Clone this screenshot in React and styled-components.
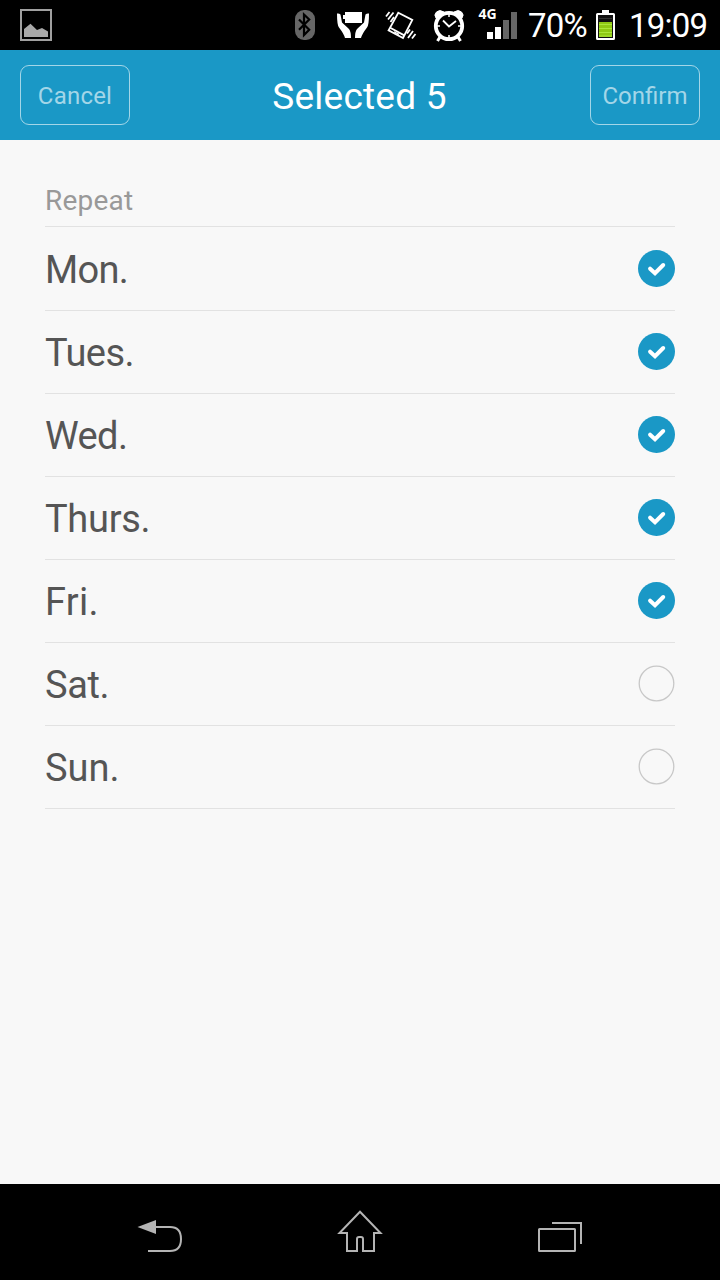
import React, { useState } from "react";
import styled, { createGlobalStyle } from "styled-components";

const GlobalStyle = createGlobalStyle`
  * { box-sizing: border-box; }
  body { margin: 0; background: #f8f8f8; }
`;

const Screen = styled.div`
  display: flex;
  flex-direction: column;
  width: 720px;
  height: 1280px;
  overflow: hidden;
  background: #f8f8f8;
  font-family: Roboto, sans-serif;
`;

const StatusBar = styled.header`
  display: flex;
  align-items: center;
  flex: 0 0 50px;
  padding: 0 11px 0 20px;
  background: #000;
  color: #fff;
  svg { display: block; flex: none; }
`;

const StatusIcons = styled.div`
  display: flex;
  align-items: center;
  margin-left: auto;
`;

const Icon = styled.svg`
  width: ${(p) => p.$w}px;
  height: 50px;
  margin-right: ${(p) => p.$gap || 0}px;
`;

const StatusText = styled.span`
  width: ${(p) => p.$w}px;
  margin-right: ${(p) => p.$gap || 0}px;
  font-size: 33px;
  line-height: 48px;
  padding-top: 2px;
  letter-spacing: ${(p) => p.$spacing}px;
  white-space: nowrap;
`;

const TitleBar = styled.div`
  display: flex;
  align-items: center;
  justify-content: space-between;
  flex: 0 0 90px;
  padding: 0 20px;
  background: #1a98c6;
`;

const BarButton = styled.button`
  width: 110px;
  height: 60px;
  padding: 1px 0 0;
  border: 1px solid #a3d6e8;
  border-radius: 9px;
  background: transparent;
  color: #a3d6e8;
  font: 400 24px/56px Roboto, sans-serif;
  letter-spacing: ${(p) => p.$spacing};
  white-space: nowrap;
`;

const Title = styled.h1`
  margin: 0;
  padding: 3px 1px 0 0;
  color: #fff;
  font-size: 37px;
  font-weight: 400;
  line-height: 50px;
  letter-spacing: 0.25px;
`;

const Content = styled.main`
  flex: 1;
  padding: 0 45px;
`;

const SectionLabel = styled.h2`
  height: 87px;
  margin: 0;
  padding-top: 42px;
  border-bottom: 1px solid #e2e2e2;
  color: #999;
  font-size: 28px;
  font-weight: 400;
  line-height: 38px;
  letter-spacing: 0.2px;
`;

const DayList = styled.ul`
  margin: 0;
  padding: 1px 0 0;
  list-style: none;
`;

const DayRow = styled.li`
  display: flex;
  align-items: center;
  justify-content: space-between;
  height: 83px;
  border-bottom: 1px solid #e2e2e2;
  color: #555;
  cursor: pointer;
`;

const DayName = styled.span`
  padding-top: 2px;
  font-size: 38px;
  line-height: 50px;
  letter-spacing: ${(p) => p.$spacing}px;
`;

const Check = styled.svg`
  display: block;
  width: 37px;
  height: 37px;
  margin-bottom: 1px;
`;

const NavBar = styled.nav`
  display: flex;
  flex: 0 0 96px;
  justify-content: space-between;
  padding: 0 136px;
  background: #000;
  svg { display: block; }
`;

const days = [
  { name: "Mon.", spacing: -0.7 },
  { name: "Tues.", spacing: -0.5 },
  { name: "Wed.", spacing: -0.6 },
  { name: "Thurs.", spacing: -0.3 },
  { name: "Fri.", spacing: 0.3 },
  { name: "Sat.", spacing: -0.4 },
  { name: "Sun.", spacing: 0 },
];

function CheckMark({ on }) {
  return (
    <Check viewBox="0 0 37 37">
      {on ? (
        <>
          <circle cx="18.5" cy="18.5" r="18.5" fill="#1a98c6" />
          <path d="M12.1 18.7 L17 23.2 L25.2 15" fill="none" stroke="#fff" strokeWidth="4" strokeLinecap="round" strokeLinejoin="miter" />
        </>
      ) : (
        <circle cx="18.5" cy="18.5" r="17.3" fill="none" stroke="#c8c8c8" strokeWidth="1.3" />
      )}
    </Check>
  );
}

function PictureIcon() {
  return (
    <Icon $w={32} viewBox="0 0 32 50">
      <rect x="1" y="10" width="30" height="30" fill="none" stroke="#a0a0a0" strokeWidth="2" />
      <path d="M4 37V29L10.5 23.7L17 30L22 28L28 31.5V37Z" fill="#a8a8a8" />
    </Icon>
  );
}

function BluetoothIcon() {
  return (
    <Icon $w={20} $gap={22} viewBox="0 0 20 50">
      <rect y="10" width="20" height="30" rx="9" fill="#666" />
      <path d="M4 19.5L14.2 29.8L9 35V14.5L14.2 19.5L4 29.8" fill="none" stroke="#000" strokeWidth="2.2" />
    </Icon>
  );
}

function BatteryCareIcon() {
  return (
    <Icon $w={32} $gap={16} viewBox="0 0 32 50" fill="#fff">
      <path d="M6 15H8V12H25V23H8V19H6Z" />
      <path d="M0 13.5Q2 13 3.5 14.5L5 22.5L12 29Q14 31.5 14 38H8Q7 34 2 27.5Q0 25 0 13.5Z" />
      <path d="M32 13.5Q30 13 28.5 14.5L27 22.5L20 29Q18 31.5 18 38H24Q25 34 30 27.5Q32 25 32 13.5Z" />
    </Icon>
  );
}

function VibrateIcon() {
  return (
    <Icon $w={32} $gap={16} viewBox="0 0 32 50" fill="none" stroke="#fff" strokeWidth="1.8">
      <path d="M13.3 12.8L27.3 20L18 38L3.6 30.4Z" />
      <path d="M5.2 27.8L19.3 35.4" />
      <path d="M9 31.7L14 34.4" strokeWidth="1.2" />
      <path d="M1 16.5L4.5 12M3 19.5L8.5 12.5M5.5 22L9 17M22 33.5L25 29.5M23 38L28 31M27 38.5L30.5 34" />
    </Icon>
  );
}

function AlarmIcon() {
  return (
    <Icon $w={32} $gap={13} viewBox="0 0 32 50" fill="none" stroke="#fff">
      <circle cx="16" cy="26" r="13.2" strokeWidth="3.8" />
      <path d="M3 18Q0.5 15 3.5 12Q6.5 9 11 12L5 18ZM29 18Q31.5 15 28.5 12Q25.5 9 21 12L27 18Z" fill="#fff" strokeWidth="1" />
      <path d="M7 37L4.5 41M25 37L27.5 41" strokeWidth="3" />
      <path d="M10 20.5L16 26.5L23 21" strokeWidth="1.8" />
      <path d="M16 14V17M16 35V38M4 26H7M25 26H28" strokeWidth="1.5" />
    </Icon>
  );
}

const NetworkText = styled.text`
  font: 700 14px "Open Sans", sans-serif;
  fill: #fff;
`;

function SignalIcon() {
  return (
    <Icon $w={39} $gap={11} viewBox="0 0 39 50">
      <NetworkText x="0.5" y="19">4G</NetworkText>
      <path d="M9 32H15V39H9ZM17 27H23V39H17Z" fill="#fff" />
      <path d="M25 20H31V39H25ZM33 12H39V39H33Z" fill="#666" />
    </Icon>
  );
}

function BatteryIcon() {
  return (
    <Icon $w={19} $gap={14} viewBox="0 0 19 50">
      <path d="M6 10H13V13H17.5Q19 13 19 14.5V38.5Q19 40 17.5 40H1.5Q0 40 0 38.5V14.5Q0 13 1.5 13H6Z" fill="#fff" />
      <rect x="2" y="15" width="15" height="23" fill="#111" />
      <rect x="3" y="22" width="13" height="15" fill="#8fc914" />
      <path d="M3 24.5H16M3 28.5H16M3 32.5H16M3 36H16" stroke="#abe63b" strokeWidth="1" />
      <path d="M3 18.5H16" stroke="#333" />
    </Icon>
  );
}

export default function App() {
  const [selected, setSelected] = useState([0, 1, 2, 3, 4]);
  const toggle = (i) =>
    setSelected((s) => (s.includes(i) ? s.filter((d) => d !== i) : [...s, i]));

  return (
    <Screen>
      <GlobalStyle />
      <StatusBar>
        <PictureIcon />
        <StatusIcons>
          <BluetoothIcon />
          <BatteryCareIcon />
          <VibrateIcon />
          <AlarmIcon />
          <SignalIcon />
          <StatusText $w={60} $gap={8} $spacing={-0.8}>70%</StatusText>
          <BatteryIcon />
          <StatusText $w={80} $spacing={-0.8}>19:09</StatusText>
        </StatusIcons>
      </StatusBar>
      <TitleBar>
        <BarButton $spacing="0.2px">Cancel</BarButton>
        <Title>Selected {selected.length}</Title>
        <BarButton $spacing="normal">Confirm</BarButton>
      </TitleBar>
      <Content>
        <SectionLabel>Repeat</SectionLabel>
        <DayList>
          {days.map((day, i) => (
            <DayRow key={day.name} onClick={() => toggle(i)}>
              <DayName $spacing={day.spacing}>{day.name}</DayName>
              <CheckMark on={selected.includes(i)} />
            </DayRow>
          ))}
        </DayList>
      </Content>
      <NavBar>
        <svg width="48" height="96" viewBox="0 0 48 96">
          <path d="M1.5 43L20 36V50Z" fill="#b4b4b4" />
          <path d="M19 43H34C42 43 45 47 45 55C45 63 42 67 34 67H12" fill="none" stroke="#b4b4b4" strokeWidth="2" />
        </svg>
        <svg width="48" height="96" viewBox="0 0 48 96" fill="none" stroke="#b4b4b4" strokeWidth="2">
          <path d="M24 27.8L44.5 49H38V67H27V55Q27 53 25 53H23Q21 53 21 55V67H11V49H3.5Z" />
        </svg>
        <svg width="48" height="96" viewBox="0 0 48 96" fill="none" stroke="#b4b4b4" strokeWidth="2">
          <rect x="3" y="45" width="36" height="22" rx="0.5" />
          <path d="M16 39H45V60" />
        </svg>
      </NavBar>
    </Screen>
  );
}
